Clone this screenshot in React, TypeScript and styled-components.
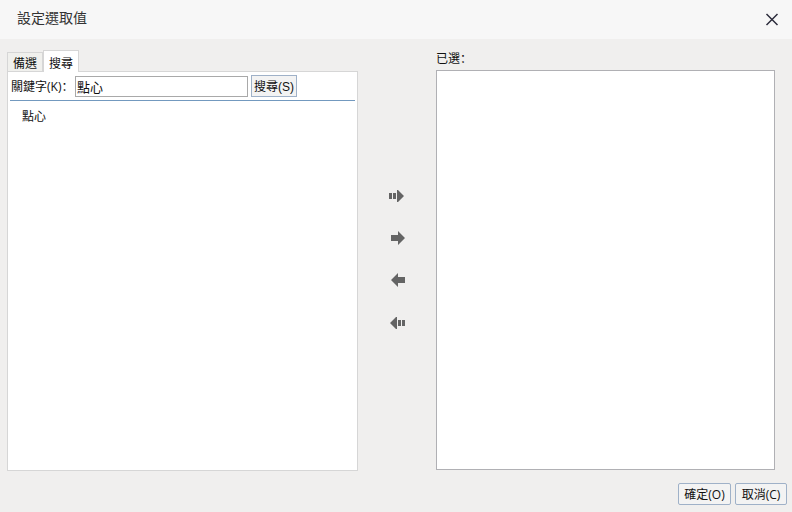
import React, { useState } from "react";
import styled, { createGlobalStyle } from "styled-components";

const GlobalStyle = createGlobalStyle`
  * { box-sizing: border-box; }
  body {
    margin: 0;
    background: #f0efee;
    color: #111;
    font: 12px/18px "Open Sans", "Noto Sans CJK TC", sans-serif;
  }
  button, input { font: inherit; color: inherit; margin: 0; }
`;

const Dialog = styled.div`
  display: flex;
  flex-direction: column;
  min-height: 100vh;
`;

const Header = styled.header`
  display: flex;
  align-items: center;
  justify-content: space-between;
  height: 39px;
  padding: 0 12px 0 17px;
  background: #f7f7f7;
`;

const Title = styled.h1`
  margin: 0;
  padding-bottom: 4px;
  font-size: 14px;
  font-weight: 400;
  line-height: 20px;
  color: #333;
`;

const IconButton = styled.button`
  display: flex;
  align-items: center;
  justify-content: center;
  padding: 0;
  border: 0;
  background: none;
  cursor: pointer;
`;

const Body = styled.main`
  flex: 1;
  display: grid;
  grid-template-columns: minmax(0, 351fr) 78px minmax(0, 339fr);
  padding: 11px 17px 0 7px;
`;

const Column = styled.section`
  display: flex;
  flex-direction: column;
`;

const TabList = styled.div`
  display: flex;
  align-items: flex-end;
  height: 21px;
`;

const Tab = styled.button<{ $active: boolean }>`
  width: 36px;
  height: ${(p) => (p.$active ? 22 : 19)}px;
  margin-bottom: ${(p) => (p.$active ? -1 : 0)}px;
  padding: ${(p) => (p.$active ? 5 : 3)}px 0 0;
  border: 1px solid #d6d6d6;
  border-bottom: 0;
  background: ${(p) => (p.$active ? "#fff" : "#f0f0ed")};
  line-height: 16px;
  cursor: pointer;
  & + & { z-index: 1; }
`;

const SearchPanel = styled.div`
  flex: 1;
  padding: 0 2px;
  border: 1px solid #d6d6d6;
  background: #fff;
`;

const SearchRow = styled.form`
  display: flex;
  align-items: center;
  height: 29px;
  padding-left: 1px;
  border-bottom: 1px solid #7399bf;
`;

const KeywordLabel = styled.label`
  width: 64px;
  padding-top: 2px;
  font-family: "Open Sans", "Noto Sans CJK SC", sans-serif;
  white-space: nowrap;
`;

const KeywordInput = styled.input`
  width: 173px;
  height: 21px;
  margin-right: 3px;
  padding: 1px 1px 0;
  border: 1px solid #a9a9a9;
  border-radius: 0;
  background: #fff;
  font-size: 13px;
  outline: none;
`;

const PushButton = styled.button<{ $rounded?: boolean; $width: number }>`
  width: ${(p) => p.$width}px;
  height: 22px;
  padding: 2px 0 0;
  border: 1px solid #9fb1c8;
  border-radius: ${(p) => (p.$rounded ? 2 : 0)}px;
  background: #f3f3f3;
  white-space: nowrap;
  line-height: 18px;
  cursor: pointer;
`;

const SearchButton = styled(PushButton)`
  font-family: "Liberation Sans", "Noto Sans CJK TC", sans-serif;
`;

const ResultList = styled.ul`
  margin: 0;
  padding: 7px 12px;
  list-style: none;
`;

const Arrows = styled.div`
  display: flex;
  flex-direction: column;
  align-items: center;
  gap: 26px;
  padding-top: 138px;
`;

const ColumnTitle = styled.h2`
  margin: 0;
  height: 20px;
  font-family: "Open Sans", "Noto Sans CJK SC", sans-serif;
  font-size: 12px;
  font-weight: 400;
  line-height: 18px;
`;

const SelectedBox = styled.div`
  flex: 1;
  margin-bottom: 1px;
  border: 1px solid #b0b0b4;
  background: #fff;
`;

const Footer = styled.footer`
  display: flex;
  justify-content: flex-end;
  gap: 4px;
  padding: 12px 5px 7px;
`;

const arrowPaths = {
  addAll: "M0 5h3v6H0zM4 5h3v6H4zM8 2h1l6 6-6 6H8z",
  add: "M2 5h7V1l7 7-7 7v-4H2z",
  remove: "M16 5H9V1L2 8l7 7v-4h7z",
  removeAll: "M16 6h-3v6h3zM12 6H9v6h3zM8 3H7L1 9l6 6h1z",
};

const arrowLabels = {
  addAll: "全部加入",
  add: "加入",
  remove: "移除",
  removeAll: "全部移除",
};

type ArrowKind = keyof typeof arrowPaths;
const arrowKinds: ArrowKind[] = ["addAll", "add", "remove", "removeAll"];

export default function App() {
  const [tab, setTab] = useState("搜尋");
  const [keyword, setKeyword] = useState("點心");

  return (
    <>
      <GlobalStyle />
      <Dialog role="dialog" aria-labelledby="title">
        <Header>
          <Title id="title">設定選取值</Title>
          <IconButton type="button" aria-label="關閉">
            <svg width="16" height="16" viewBox="0 0 16 16" fill="none" stroke="#2c2c3c" strokeWidth="1.5">
              <path d="M2.5 2l11 11M13.5 2l-11 11" />
            </svg>
          </IconButton>
        </Header>
        <Body>
          <Column>
            <TabList role="tablist">
              {["備選", "搜尋"].map((name) => (
                <Tab
                  key={name}
                  type="button"
                  role="tab"
                  aria-selected={tab === name}
                  $active={tab === name}
                  onClick={() => setTab(name)}
                >
                  {name}
                </Tab>
              ))}
            </TabList>
            <SearchPanel role="tabpanel">
              <SearchRow onSubmit={(e) => e.preventDefault()}>
                <KeywordLabel htmlFor="keyword">關鍵字(K)：</KeywordLabel>
                <KeywordInput
                  id="keyword"
                  value={keyword}
                  onChange={(e) => setKeyword(e.target.value)}
                />
                <SearchButton type="submit" $width={46}>搜尋(S)</SearchButton>
              </SearchRow>
              <ResultList>
                <li>點心</li>
              </ResultList>
            </SearchPanel>
          </Column>
          <Arrows>
            {arrowKinds.map((kind) => (
              <IconButton key={kind} type="button" aria-label={arrowLabels[kind]}>
                <svg width="16" height="16" viewBox="0 0 16 16" fill="#646464">
                  <path d={arrowPaths[kind]} />
                </svg>
              </IconButton>
            ))}
          </Arrows>
          <Column>
            <ColumnTitle>已選：</ColumnTitle>
            <SelectedBox />
          </Column>
        </Body>
        <Footer>
          <PushButton type="button" $rounded $width={53}>確定(O)</PushButton>
          <PushButton type="button" $rounded $width={52}>取消(C)</PushButton>
        </Footer>
      </Dialog>
    </>
  );
}
